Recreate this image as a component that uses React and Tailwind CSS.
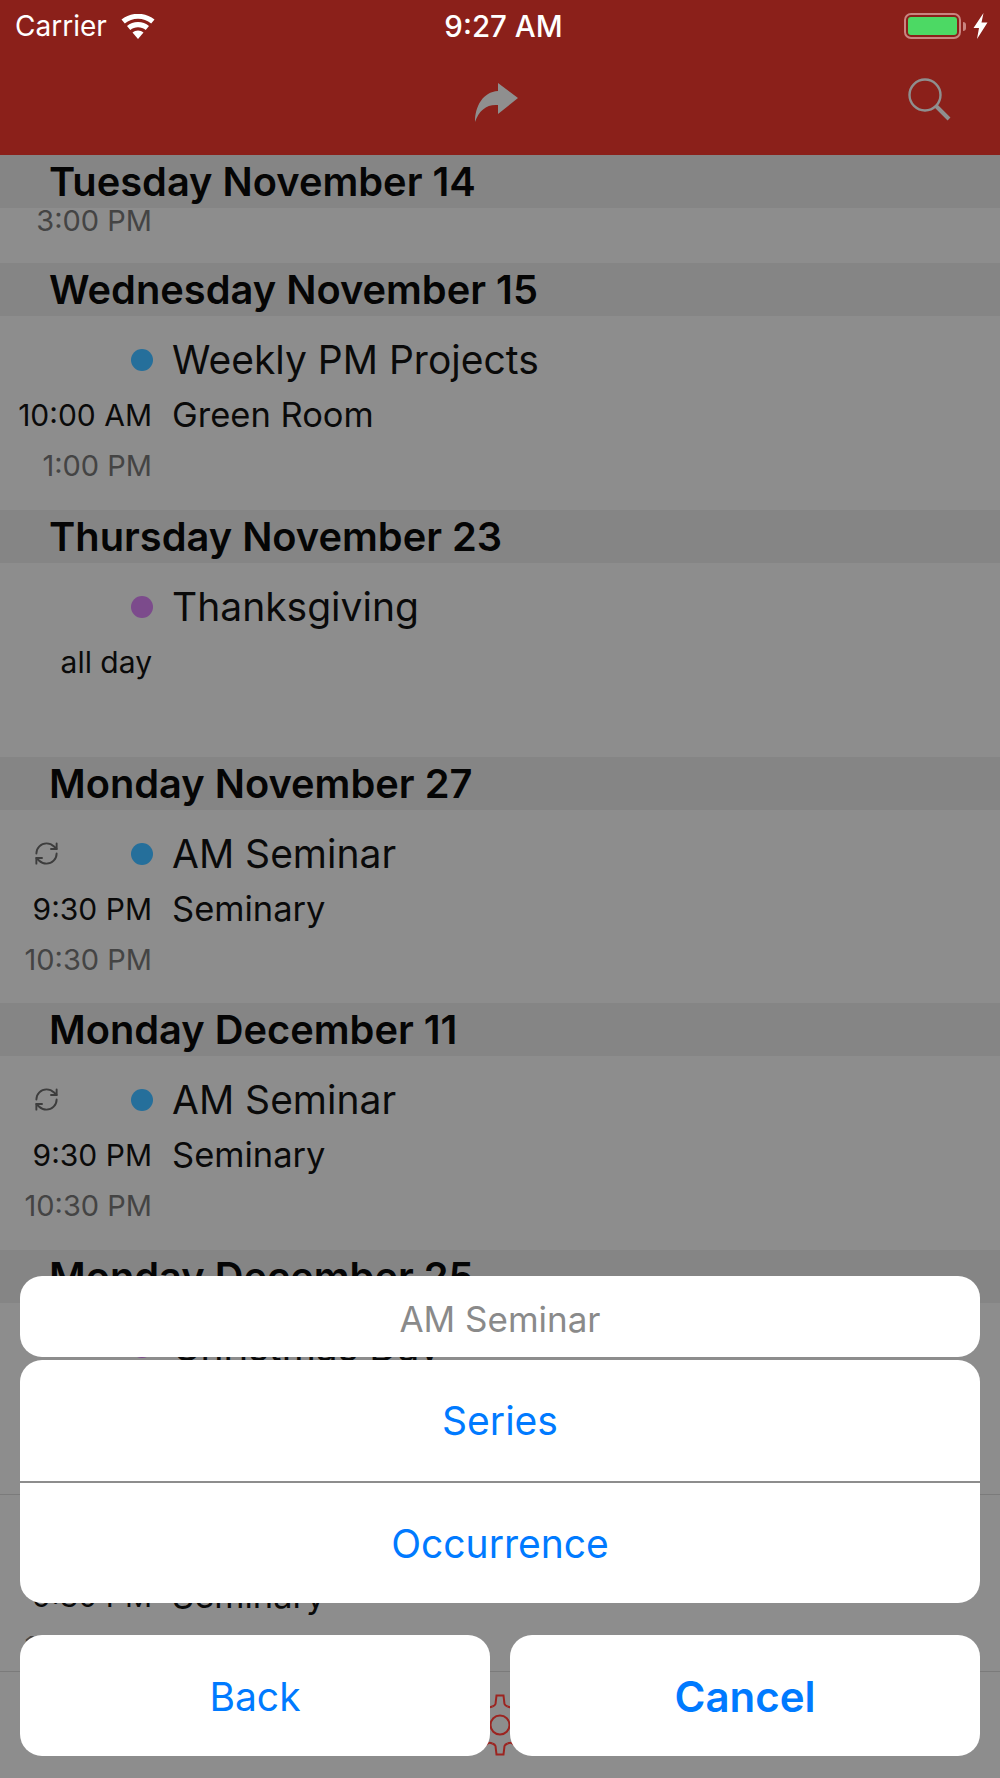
import { RefreshCw } from "lucide-react";

const sf = "font-['Inter','Liberation_Sans',sans-serif]";

const sections = [
  {
    title: "Tuesday November 14",
    rows: [{ end: "3:00 PM", endOnly: true }],
  },
  {
    title: "Wednesday November 15",
    rows: [{ name: "Weekly PM Projects", place: "Green Room", start: "10:00 AM", end: "1:00 PM", dot: "bg-[#256f9b]", height: "h-[194px]" }],
  },
  {
    title: "Thursday November 23",
    rows: [{ name: "Thanksgiving", start: "all day", dot: "bg-[#7c4b8c]", height: "h-[194px]" }],
  },
  {
    title: "Monday November 27",
    rows: [{ name: "AM Seminar", place: "Seminary", start: "9:30 PM", end: "10:30 PM", dot: "bg-[#256f9b]", repeat: true, height: "h-[193px]" }],
  },
  {
    title: "Monday December 11",
    rows: [{ name: "AM Seminar", place: "Seminary", start: "9:30 PM", end: "10:30 PM", dot: "bg-[#256f9b]", repeat: true, height: "h-[194px]" }],
  },
  {
    title: "Monday December 25",
    rows: [{ name: "Christmas Day", start: "all day", dot: "bg-[#7c4b8c]", height: "h-[192px] border-b border-[#7b7b7b]" }],
  },
];

function EventRow({ row }) {
  if (row.endOnly) {
    return (
      <div className="h-[55px] bg-[#8d8d8d]">
        <div className="w-[152px] text-right text-[29px] leading-[26px] text-[#444444]">{row.end}</div>
      </div>
    );
  }

  return (
    <div className={`${row.height} bg-[#8d8d8d] flex pt-[22px]`}>
      <div className="w-[152px] shrink-0 flex flex-col items-end">
        <div className="relative w-full h-[44px] flex items-center justify-end">
          {row.repeat && (
            <RefreshCw className="absolute left-[33px] top-[8px] w-[27px] h-[27px] text-[#3d3d3d]" strokeWidth={1.7} />
          )}
          <span className={`${row.dot} w-[22px] h-[22px] rounded-full mr-[-1px]`} />
        </div>
        <div className="mt-[13px] h-[40px] flex items-center text-[30px] text-[#0a0a0a] whitespace-nowrap">{row.start}</div>
        <div className="mt-[11px] h-[40px] flex items-center text-[29px] text-[#444444] whitespace-nowrap">{row.end}</div>
      </div>
      <div className="ml-[20px] flex flex-col">
        <div className="h-[44px] pt-[1px] flex items-center text-[39px] text-[#0a0a0a] whitespace-nowrap">{row.name}</div>
        <div className="mt-[13px] h-[40px] flex items-center text-[34.5px] text-[#0a0a0a] whitespace-nowrap">{row.place}</div>
      </div>
    </div>
  );
}

function Section({ section }) {
  return (
    <section>
      <div className="h-[53px] bg-[#858585] pl-[49px] pt-[1px] flex items-center text-[39.8px] font-semibold text-[#050505] whitespace-nowrap">
        {section.title}
      </div>
      {section.rows.map((row, i) => (
        <EventRow row={row} key={i} />
      ))}
    </section>
  );
}

function Gear() {
  return (
    <svg viewBox="-32 -32 64 64" className="w-[64px] h-[64px] text-[#9c2420]" fill="none" stroke="currentColor" strokeWidth="2">
      <circle r="9.5" />
      {[0, 45, 90, 135, 180, 225, 270, 315].map((deg) => (
        <path key={deg} transform={`rotate(${deg})`} d="M-7.65 -18.5 Q-5 -19.5 -4.5 -21 L-3.5 -29.5 H3.5 L4.5 -21 Q5 -19.5 7.65 -18.5" />
      ))}
    </svg>
  );
}

function StatusBar() {
  return (
    <div className="h-[52px] flex items-center justify-between text-white relative">
      <div className="flex items-center pl-[15px]">
        <span className="text-[28px]">Carrier</span>
        <svg viewBox="0 0 34 25" className="w-[34px] h-[25px] ml-[14px]" fill="white">
          <path d="M17 25 L11.5 18.5 C14.5 15.7 19.5 15.7 22.5 18.5 Z" />
          <path d="M9.3 16 L6 12 C11.8 6.8 22.2 6.8 28 12 L24.7 16 C20.5 12.3 13.5 12.3 9.3 16 Z" />
          <path d="M3.8 9.5 L0.5 5.6 C9.5 -2.2 24.5 -2.2 33.5 5.6 L30.2 9.5 C22.8 3.2 11.2 3.2 3.8 9.5 Z" />
        </svg>
      </div>
      <span className="absolute left-[7px] right-0 text-center text-[29.5px] font-medium">9:27 AM</span>
      <div className="flex items-center pr-[12px]">
        <div className="w-[57px] h-[26px] rounded-[7px] border-2 border-[#c98580] p-[2px]">
          <div className="w-full h-full rounded-[3px] bg-[#4cd964]" />
        </div>
        <div className="w-[3px] h-[9px] ml-[2px] rounded-r-[3px] bg-[#c98580]" />
        <svg viewBox="0 0 15 26" className="w-[15px] h-[26px] ml-[7px]" fill="white">
          <path d="M10.5 0 L0.5 15 H6 L4 26 L14.5 9.5 H8.5 Z" />
        </svg>
      </div>
    </div>
  );
}

function NavBar() {
  return (
    <div className="h-[155px] bg-[#8b201a]">
      <StatusBar />
      <div className="relative h-[103px] flex justify-center">
        <svg viewBox="34 13 43 39" className="w-[43px] h-[39px] mt-[31px] mr-[7px]" fill="#8f8f8f">
          <path d="M57 13 L77 28 L57 44 V35 C46 34 38 40 34 52 C34 36 42 22 57 21 Z" />
        </svg>
        <svg viewBox="0 0 44 44" className="absolute right-[48px] top-[26px] w-[44px] h-[44px]" fill="none" stroke="#8f8f8f">
          <circle cx="17" cy="17" r="15.5" strokeWidth="2.4" />
          <path d="M28 28 L41 41" strokeWidth="4" />
        </svg>
      </div>
    </div>
  );
}

function ActionSheet() {
  const card = "bg-white rounded-[22px] flex items-center justify-center";
  return (
    <div className="absolute left-[20px] right-[20px] bottom-[22px] flex flex-col">
      <div className={`${card} h-[81px] pt-[5px] text-[35px] text-[#8a8a8a]`}>AM Seminar</div>
      <div className="mt-[3px] rounded-[22px] bg-white overflow-hidden text-[39px] text-[#007aff]">
        <div className="h-[121px] pt-[2px] flex items-center justify-center">Series</div>
        <div className="h-[2px] bg-[#8d8d8d]" />
        <div className="h-[120px] pt-[2px] flex items-center justify-center">Occurrence</div>
      </div>
      <div className="mt-[32px] flex gap-[20px] text-[39px] text-[#007aff]">
        <div className={`${card} flex-1 h-[121px] pt-[3px]`}>Back</div>
        <div className={`${card} flex-1 h-[121px] pt-[1px] font-semibold text-[42px]`}>Cancel</div>
      </div>
    </div>
  );
}

export default function App() {
  return (
    <div className={`relative w-[1000px] h-[1778px] overflow-hidden bg-[#8d8d8d] ${sf}`}>
      <NavBar />
      {sections.map((section) => (
        <Section section={section} key={section.title} />
      ))}
      <div className="h-[176px] bg-[#8d8d8d] pt-[2px]">
        <EventRow row={{ name: "AM Seminar", place: "Seminary", start: "9:30 PM", end: "10:30 PM", dot: "bg-[#256f9b]", repeat: true, height: "h-[174px]" }} />
      </div>
      <div className="h-[107px] bg-[#8d8d8d] border-t border-[#7b7b7b] flex justify-center pt-[21px]">
        <Gear />
      </div>
      <ActionSheet />
    </div>
  );
}
